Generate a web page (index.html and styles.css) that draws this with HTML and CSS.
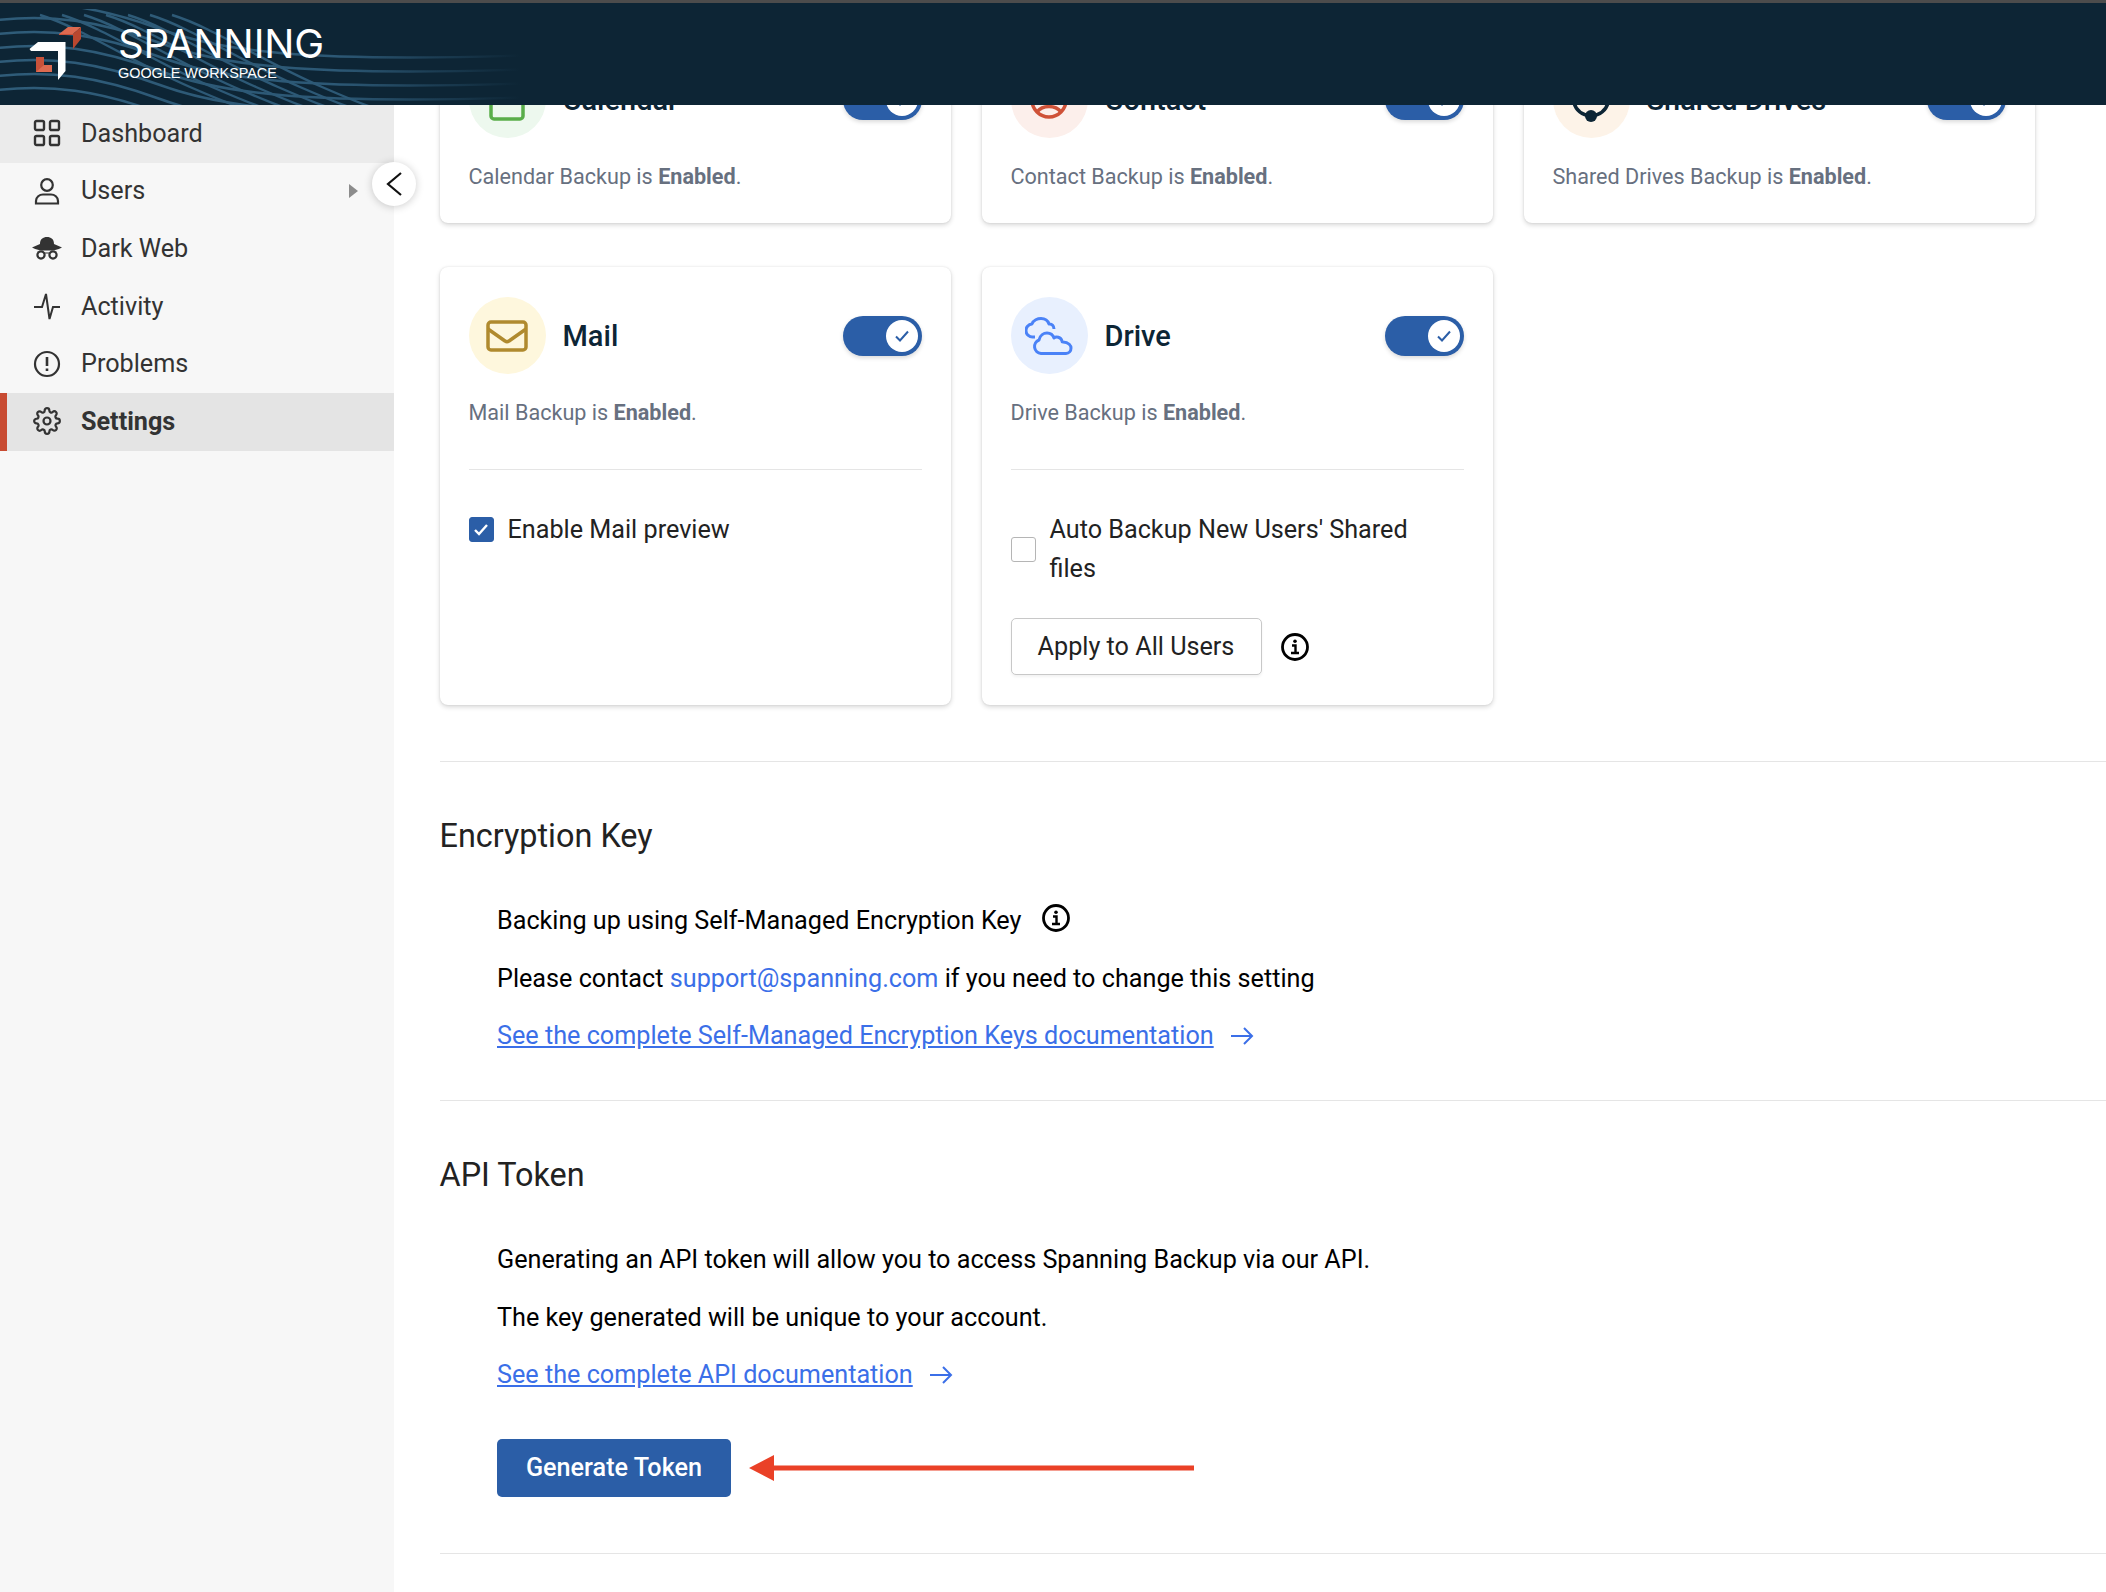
FILE: index.html
```html
<!DOCTYPE html>
<html lang="en">
<head>
    <meta charset="UTF-8">
    <title>Spanning Backup - Settings</title>
    <link rel="stylesheet" href="styles.css">
</head>
<body>
    <div class="header">
        <svg class="waves" width="560" height="96" viewBox="0 0 560 96" fill="none">
            <defs>
                <linearGradient id="waveFade" gradientUnits="userSpaceOnUse" x1="0" y1="0" x2="520" y2="0">
                    <stop offset="0" stop-color="#2f5c79"/>
                    <stop offset="0.65" stop-color="#2c5875"/>
                    <stop offset="1" stop-color="#0d2535"/>
                </linearGradient>
                <path id="waveA" d="M-10 6C50 -2 100 6 160 28S300 62 540 54"/>
                <path id="waveB" d="M90 0C130 12 180 46 240 72S300 96 340 104"/>
            </defs>
            <g stroke="url(#waveFade)" stroke-width="2.400">
                <use href="#waveA" y="-8"/>
                <use href="#waveA" y="6"/>
                <use href="#waveA" y="20"/>
                <use href="#waveA" y="34"/>
                <use href="#waveA" y="48"/>
                <use href="#waveA" y="62"/>
                <use href="#waveA" y="76"/>
                <use href="#waveB" x="-50" y="6"/>
                <use href="#waveB" x="-28" y="6"/>
                <use href="#waveB" x="-6" y="6"/>
                <use href="#waveB" x="16" y="6"/>
                <use href="#waveB" x="38" y="6"/>
                <use href="#waveB" x="60" y="6"/>
                <use href="#waveB" x="82" y="6"/>
            </g>
        </svg>
        <svg class="logo" width="56" height="56" viewBox="29 27 56 56">
            <polygon points="29.5,50 38,43 65.5,43 65.5,72 58,81 58,52 31,52" fill="#fff"/>
            <polygon points="36,58 44,58 44,66 52,66 52,73 36,73" fill="#c9523a"/>
            <polygon points="36,73 44,66 52,66 52,73" fill="#dd6a50"/>
            <polygon points="59,35 68,28 81,28 73,35" fill="#dd6a50"/>
            <polygon points="73,35 81,28 81,40 73,50" fill="#b9472f"/>
            <polygon points="59,35 73,35 73,36 59,36" fill="#c9523a"/>
        </svg>
        <div class="brand">
            <div class="brand-name">SPANNING</div>
            <div class="brand-sub">GOOGLE WORKSPACE</div>
        </div>
    </div>

    <div class="app">
        <div class="sidebar">
            <a class="nav-item hover" href="#">
                <svg class="nav-icon" viewBox="0 0 28 28" fill="none" stroke="#333" stroke-width="2.4">
                    <rect x="2" y="2" width="9" height="9" rx="1.6"/>
                    <rect x="17" y="2" width="9" height="9" rx="1.6"/>
                    <rect x="2" y="17" width="9" height="9" rx="1.6"/>
                    <rect x="17" y="17" width="9" height="9" rx="1.6"/>
                </svg>
                Dashboard
            </a>
            <a class="nav-item" href="#">
                <svg class="nav-icon" viewBox="0 0 28 28" fill="none" stroke="#333" stroke-width="2.2">
                    <circle cx="14" cy="8" r="5.8"/>
                    <path d="M3 26.5v-2.5c0-4 3.5-6.500 7-6.500h8c3.500 0 7 2.500 7 6.500v2.500z"/>
                </svg>
                Users
                <span class="caret"></span>
            </a>
            <a class="nav-item" href="#">
                <svg class="nav-icon hat" viewBox="0 0 32 24" fill="#333">
                    <path d="M9 8C9 3 12 1 16 1s7 2 7 7l8 3.500c-4 2.500-9 3-15 3s-11-.5-15-3z"/>
                    <path d="M6 15.500c3 .8 6.500 1 10 1s7-.2 10-1l-2 2h-16z"/>
                    <g fill="#f7f7f7" stroke="#333" stroke-width="2.200">
                        <circle cx="10" cy="19" r="3.600"/>
                        <circle cx="22" cy="19" r="3.600"/>
                    </g>
                </svg>
                Dark Web
            </a>
            <a class="nav-item" href="#">
                <svg class="nav-icon" viewBox="0 0 28 28" fill="none" stroke="#333" stroke-width="2">
                    <path d="M1 15h8l4-13 3.500 25 3.500-12h7"/>
                </svg>
                Activity
            </a>
            <a class="nav-item" href="#">
                <svg class="nav-icon" viewBox="0 0 28 28" fill="none" stroke="#333" stroke-width="2.200">
                    <circle cx="14" cy="14" r="12"/>
                    <path d="M14 7v9M14 18.500v2.500" stroke-width="2.600"/>
                </svg>
                Problems
            </a>
            <a class="nav-item active" href="#">
                <svg class="nav-icon" viewBox="0 0 24 24" fill="none" stroke="#333" stroke-width="1.900" stroke-linejoin="round">
                    <circle cx="12" cy="12" r="3"/>
                    <path d="M19.400 15a1.650 1.650 0 0 0 .33 1.820l.06.06a2 2 0 0 1 0 2.830 2 2 0 0 1-2.830 0l-.06-.06a1.650 1.650 0 0 0-1.820-.33 1.650 1.650 0 0 0-1 1.510V21a2 2 0 0 1-2 2 2 2 0 0 1-2-2v-.09A1.650 1.650 0 0 0 9 19.400a1.650 1.650 0 0 0-1.820.33l-.06.06a2 2 0 0 1-2.830 0 2 2 0 0 1 0-2.830l.06-.06a1.650 1.650 0 0 0 .33-1.820 1.650 1.650 0 0 0-1.510-1H3a2 2 0 0 1-2-2 2 2 0 0 1 2-2h.09A1.650 1.650 0 0 0 4.600 9a1.650 1.650 0 0 0-.33-1.820l-.06-.06a2 2 0 0 1 0-2.830 2 2 0 0 1 2.830 0l.06.06a1.650 1.650 0 0 0 1.820.33H9a1.650 1.650 0 0 0 1-1.510V3a2 2 0 0 1 2-2 2 2 0 0 1 2 2v.09a1.650 1.650 0 0 0 1 1.510 1.650 1.650 0 0 0 1.820-.33l.06-.06a2 2 0 0 1 2.830 0 2 2 0 0 1 0 2.830l-.06.06a1.650 1.650 0 0 0-.33 1.820V9a1.650 1.650 0 0 0 1.510 1H21a2 2 0 0 1 2 2 2 2 0 0 1-2 2h-.09a1.650 1.650 0 0 0-1.510 1z"/>
                </svg>
                Settings
            </a>
            <button class="collapse">
                <svg width="18" height="26" viewBox="0 0 18 26" fill="none" stroke="#111" stroke-width="2.200">
                    <path d="M16 2L3 13l13 11"/>
                </svg>
            </button>
        </div>

        <div class="content">
            <div class="cards">
                <div class="card">
                    <div class="card-head">
                        <div class="circle green">
                            <svg width="36" height="43" viewBox="0 0 36 43" fill="none" stroke="#5aad4a" stroke-width="3.500">
                                <rect x="2" y="2" width="32" height="39" rx="3"/>
                            </svg>
                        </div>
                        <h3>Calendar</h3>
                        <span class="toggle"><span class="knob"><svg width="14" height="12" viewBox="0 0 14 12" fill="none" stroke="#2b5ea7" stroke-width="2"><path d="M1 6.500l4 4 8-9"/></svg></span></span>
                    </div>
                    <p class="desc">Calendar Backup is <b>Enabled</b>.</p>
                </div>
                <div class="card">
                    <div class="card-head">
                        <div class="circle red">
                            <svg width="38" height="38" viewBox="0 0 38 38" fill="none" stroke="#cf5238" stroke-width="3.500">
                                <circle cx="19" cy="19" r="17"/>
                                <path d="M7 31c3-4 7-5.500 12-5.500s9 1.500 12 5.500"/>
                            </svg>
                        </div>
                        <h3>Contact</h3>
                        <span class="toggle"><span class="knob"><svg width="14" height="12" viewBox="0 0 14 12" fill="none" stroke="#2b5ea7" stroke-width="2"><path d="M1 6.500l4 4 8-9"/></svg></span></span>
                    </div>
                    <p class="desc">Contact Backup is <b>Enabled</b>.</p>
                </div>
                <div class="card">
                    <div class="card-head">
                        <div class="circle orange">
                            <svg width="40" height="46" viewBox="0 0 40 46" fill="none" stroke="#0d2535" stroke-width="3.500">
                                <path d="M3 26c2 7 8 12 17 13 9-1 15-6 17-13"/>
                                <circle cx="20" cy="39" r="6" fill="#0d2535" stroke="none"/>
                            </svg>
                        </div>
                        <h3>Shared Drives</h3>
                        <span class="toggle"><span class="knob"><svg width="14" height="12" viewBox="0 0 14 12" fill="none" stroke="#2b5ea7" stroke-width="2"><path d="M1 6.500l4 4 8-9"/></svg></span></span>
                    </div>
                    <p class="desc">Shared Drives Backup is <b>Enabled</b>.</p>
                </div>

                <div class="card">
                    <div class="card-head">
                        <div class="circle yellow">
                            <svg width="42" height="32" viewBox="0 0 42 32" fill="none" stroke="#b08a2e" stroke-width="3.500" stroke-linejoin="round">
                                <rect x="2" y="2" width="38" height="28" rx="3"/>
                                <path d="M2 9l17 12c1.300.8 2.700.8 4 0l17-12"/>
                            </svg>
                        </div>
                        <h3>Mail</h3>
                        <span class="toggle"><span class="knob"><svg width="14" height="12" viewBox="0 0 14 12" fill="none" stroke="#2b5ea7" stroke-width="2"><path d="M1 6.500l4 4 8-9"/></svg></span></span>
                    </div>
                    <p class="desc">Mail Backup is <b>Enabled</b>.</p>
                    <div class="options">
                        <label class="check">
                            <span class="box checked"><svg width="16" height="14" viewBox="0 0 16 14" fill="none" stroke="#fff" stroke-width="2.400"><path d="M2 7l4 4 8-9"/></svg></span>
                            <span>Enable Mail preview</span>
                        </label>
                    </div>
                </div>
                <div class="card">
                    <div class="card-head">
                        <div class="circle blue">
                            <svg class="clouds" width="48" height="38" viewBox="0 0 48 38" fill="none" stroke="#4a82f7" stroke-width="3" stroke-linejoin="round">
                                <path d="M10 20H8a6.500 6.500 0 0 1-1-13C8 3 13 1.500 16 1.500 20 1.500 23 4 24 7 27 6.500 29 9 29 12"/>
                                <path d="M16 36.500a7 7 0 0 1-2-13.500C15 18 19 16 22 16c4 0 6 2 7 5 2-2 7-1 8 3 0 1 0 1 1 1 6 0 8 4 8 6 0 3-2 5.500-5 5.500z"/>
                            </svg>
                        </div>
                        <h3>Drive</h3>
                        <span class="toggle"><span class="knob"><svg width="14" height="12" viewBox="0 0 14 12" fill="none" stroke="#2b5ea7" stroke-width="2"><path d="M1 6.500l4 4 8-9"/></svg></span></span>
                    </div>
                    <p class="desc">Drive Backup is <b>Enabled</b>.</p>
                    <div class="options">
                        <label class="check">
                            <span class="box"></span>
                            <span>Auto Backup New Users' Shared<br>files</span>
                        </label>
                        <div class="apply-row">
                            <button class="btn-outline">Apply to All Users</button>
                            <svg class="info" viewBox="0 0 28 28" fill="none" stroke="#000" stroke-width="2.800">
                                <circle cx="14" cy="14" r="12.500"/>
                                <path d="M11 12.500h3.500v7M10 20h8" stroke-width="2.400"/>
                                <circle cx="14" cy="8.200" r="1.800" fill="#000" stroke="none"/>
                            </svg>
                        </div>
                    </div>
                </div>
            </div>

            <div class="section">
                <h2>Encryption Key</h2>
                <div class="section-body">
                    <div class="line">
                        <span>Backing up using Self-Managed Encryption Key</span>
                        <svg class="info info-up" viewBox="0 0 28 28" fill="none" stroke="#000" stroke-width="2.800">
                            <circle cx="14" cy="14" r="12.500"/>
                            <path d="M11 12.500h3.500v7M10 20h8" stroke-width="2.400"/>
                            <circle cx="14" cy="8.200" r="1.800" fill="#000" stroke="none"/>
                        </svg>
                    </div>
                    <div class="line"><span>Please contact <a href="#" class="plain-link">support@spanning.com</a> if you need to change this setting</span></div>
                    <div class="line">
                        <a href="#">See the complete Self-Managed Encryption Keys documentation</a>
                        <svg class="arrow" width="24" height="20" viewBox="0 0 24 20" fill="none" stroke="#3b6fe8" stroke-width="2"><path d="M1 10h21M14 2l8 8-8 8"/></svg>
                    </div>
                </div>
            </div>

            <div class="section">
                <h2>API Token</h2>
                <div class="section-body">
                    <div class="line">Generating an API token will allow you to access Spanning Backup via our API.</div>
                    <div class="line">The key generated will be unique to your account.</div>
                    <div class="line">
                        <a href="#">See the complete API documentation</a>
                        <svg class="arrow" width="24" height="20" viewBox="0 0 24 20" fill="none" stroke="#3b6fe8" stroke-width="2"><path d="M1 10h21M14 2l8 8-8 8"/></svg>
                    </div>
                    <div class="token-row">
                        <button class="btn-primary">Generate Token</button>
                        <svg width="445" height="26" viewBox="0 0 445 26" fill="#ea4127"><polygon points="0,13 25,0 25,10.500 445,10.500 445,15.500 25,15.500 25,26"/></svg>
                    </div>
                </div>
            </div>
            <div class="section"></div>
        </div>
    </div>
</body>
</html>
```

FILE: styles.css
```css
* {
    box-sizing: border-box;
}

body {
    margin: 0;
    height: 1592px;
    overflow: hidden;
    background-color: #fff;
    color: #000;
    font-family: Roboto, "Liberation Sans", sans-serif;
    font-size: 25.200px;
    display: flex;
    flex-direction: column;
}

a {
    color: #3b6fe8;
}

.header {
    position: relative;
    z-index: 5;
    flex: none;
    height: 105px;
    background-color: #0d2535;
    border-top: 3px solid #4c4c4c;
    display: flex;
    align-items: center;
    padding-left: 29px;
    overflow: hidden;
}

.waves {
    position: absolute;
    left: 0;
    top: 6px;
}

.logo {
    position: relative;
    margin-top: -1px;
}

.brand {
    position: relative;
    margin-left: 33px;
    margin-top: -3px;
    color: #fff;
}

.brand-name {
    font-family: Inter, sans-serif;
    font-weight: 400;
    font-size: 40px;
    line-height: 41px;
    letter-spacing: -0.100px;
}

.brand-sub {
    font-family: "Liberation Sans", sans-serif;
    font-size: 14.400px;
    line-height: 18px;
}

.app {
    flex: 1;
    display: flex;
    min-height: 0;
}

.sidebar {
    position: relative;
    z-index: 2;
    flex: none;
    width: 394px;
    background-color: #f7f7f7;
}

.nav-item {
    display: flex;
    align-items: center;
    height: 57.600px;
    padding-left: 33px;
    padding-bottom: 1px;
    color: #333;
    text-decoration: none;
}

.nav-item.hover {
    background-color: #ebebeb;
}

.nav-item.active {
    background-color: #e4e4e4;
    border-left: 7px solid #c84b32;
    padding-left: 26px;
    font-weight: 700;
}

.nav-icon {
    width: 28px;
    height: 28px;
    margin-right: 20px;
}

.nav-icon.hat {
    width: 32px;
    margin-left: -2px;
    margin-right: 18px;
}

.caret {
    width: 0;
    height: 0;
    margin-left: auto;
    margin-right: 36px;
    border-left: 9px solid #8c8c8c;
    border-top: 7px solid transparent;
    border-bottom: 7px solid transparent;
}

.collapse {
    position: absolute;
    top: 57px;
    right: -22px;
    width: 44px;
    height: 44px;
    border: none;
    border-radius: 50%;
    background-color: #fff;
    box-shadow: 0 1px 8px rgba(0,0,0,0.2);
    display: flex;
    align-items: center;
    justify-content: center;
    padding: 0;
}

.content {
    flex: 1;
    min-width: 0;
    padding-left: 45.500px;
}

/* the page is scrolled, the first row goes under the header */
.cards {
    display: grid;
    grid-template-columns: repeat(3, 511px);
    gap: 44px 31px;
    margin-top: -74px;
    margin-bottom: 56px;
}

.card {
    background-color: #fff;
    border-radius: 8px;
    box-shadow: 0 2px 5px rgba(0,0,0,0.16), 0 0 2px rgba(0,0,0,0.1);
    padding: 30px 29px 29px;
}

.card-head {
    display: flex;
    align-items: center;
}

.card-head h3 {
    margin: 0 0 0 17px;
    font-size: 29px;
    font-weight: 500;
    color: #0d2535;
}

.circle {
    width: 77px;
    height: 77px;
    border-radius: 50%;
    display: flex;
    align-items: center;
    justify-content: center;
    flex: none;
}

.green { background-color: #edf8ee; }
.red { background-color: #fcefeb; }
.orange { background-color: #fdf3e8; }
.yellow { background-color: #fef7dd; }
.blue { background-color: #e8f0fe; }

.toggle {
    margin-left: auto;
    flex: none;
    width: 79px;
    height: 40px;
    border-radius: 20px;
    background-color: #2b5ea7;
    box-shadow: 0 2px 4px rgba(0,0,0,0.15);
    display: flex;
    align-items: center;
    justify-content: flex-end;
    padding-right: 4px;
}

.knob {
    width: 32px;
    height: 32px;
    border-radius: 50%;
    background-color: #fff;
    display: flex;
    align-items: center;
    justify-content: center;
}

.desc {
    margin: 25px 0 3px;
    font-size: 21.600px;
    line-height: 28px;
    color: #67707f;
}

.desc b {
    font-weight: 700;
}

.options {
    margin-top: 42px;
    border-top: 1px solid #e5e5e5;
    padding-top: 40px;
}

.check {
    display: flex;
    align-items: center;
    gap: 14px;
    line-height: 39px;
    color: #222;
}

.box {
    flex: none;
    width: 25px;
    height: 25px;
    border: 1px solid #b5b5b5;
    border-radius: 3px;
    display: flex;
    align-items: center;
    justify-content: center;
}

.box.checked {
    background-color: #2b5ea7;
    border-color: #2b5ea7;
}

.apply-row {
    display: flex;
    align-items: center;
    gap: 19px;
    margin-top: 30px;
    margin-bottom: 1px;
}

.btn-outline {
    height: 57px;
    width: 251px;
    background-color: #fff;
    border: 1px solid #c8c8c8;
    border-radius: 5px;
    box-shadow: 0 2px 3px rgba(0,0,0,0.05);
    font: inherit;
    color: #222;
}

.info {
    width: 28px;
    height: 28px;
}

.info-up {
    margin-left: 21px;
    transform: translateY(-3px);
}

.section {
    border-top: 1px solid #e5e5e5;
    padding: 54px 0 35px;
}

.section h2 {
    margin: 0;
    font-size: 32.400px;
    font-weight: 400;
    line-height: 40px;
    color: #222;
}

.section-body {
    margin-top: 36px;
    padding-left: 57.500px;
}

.line {
    display: flex;
    align-items: center;
    height: 57.600px;
}

.plain-link {
    text-decoration: none;
}

.arrow {
    margin-left: 16px;
}

.token-row {
    display: flex;
    align-items: center;
    gap: 18px;
    margin-top: 35px;
    margin-bottom: 21px;
}

.btn-primary {
    width: 234px;
    height: 58px;
    background-color: #2b5ea7;
    border: none;
    border-radius: 5px;
    color: #fff;
    font: inherit;
    font-weight: 500;
}
```
